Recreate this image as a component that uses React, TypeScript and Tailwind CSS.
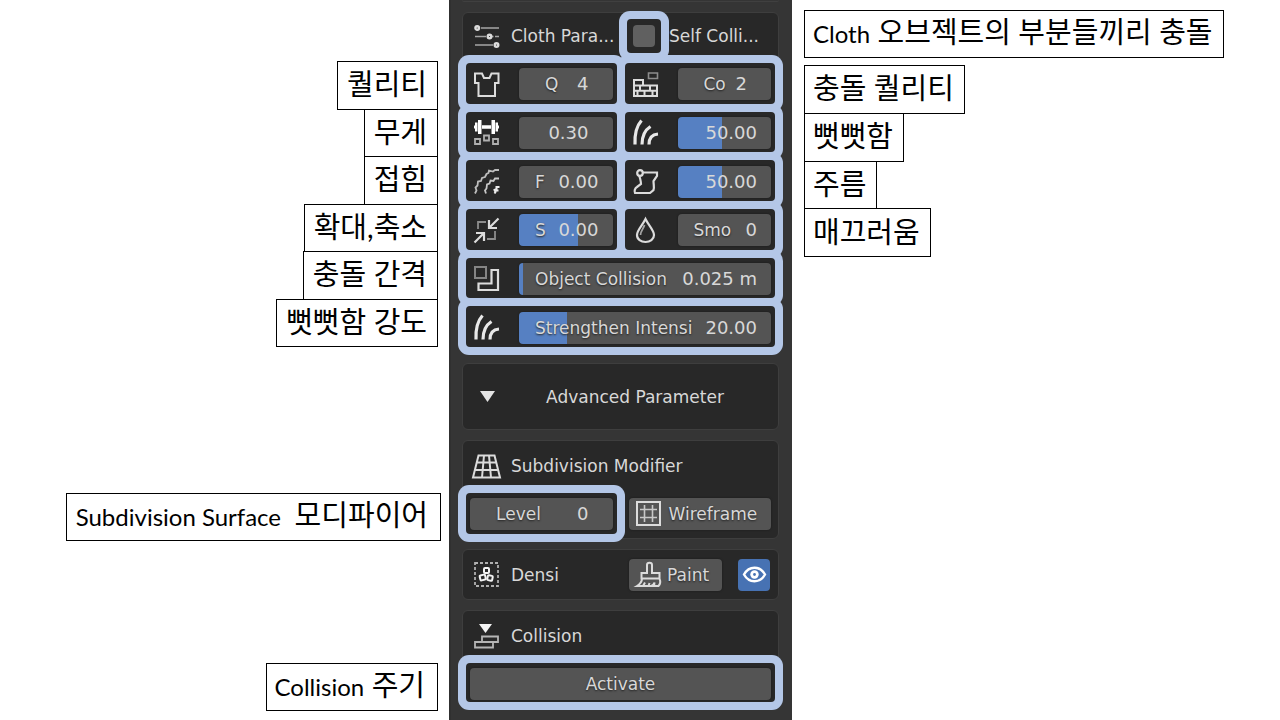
import { useState } from "react";
import type { ReactNode } from "react";

function Icon({ children }: { children: ReactNode }) {
  return (
    <svg
      viewBox="0 0 25 25"
      className="h-[25px] w-[25px] shrink-0 overflow-visible"
      fill="none"
      stroke="#dcdcdc"
      strokeWidth="1.6"
      aria-hidden="true"
    >
      {children}
    </svg>
  );
}

const SlidersIcon = () => (
  <Icon>
    <g stroke="#a5a5a5" strokeWidth="1.6">
      <path d="M7 4h18M1 12.500h11M18 12.500h1.500M21 12.500h4M1 21h18" />
    </g>
    <g strokeWidth="2.4">
      <circle cx="3.200" cy="4" r="1.800" />
      <circle cx="15.500" cy="12.500" r="1.800" />
      <circle cx="22.500" cy="21" r="1.800" />
    </g>
  </Icon>
);

const ShirtIcon = () => (
  <Icon>
    <path d="M1 1.500h7l2 4.500h5.500l2-4.500h7v9.500h-3.500V24H4.500V11H1z" strokeWidth="2" />
  </Icon>
);

const BricksIcon = () => (
  <Icon>
    <path d="M15.500 1h9v5.500h-9z" stroke="#8d8d8d" />
    <path
      d="M1 24V8h9v5.500h14V24zM1 13.500h9M1 18.700h23M7 13.500v5M17 13.500v5M11.500 18.700V24M19.500 18.700V24M4.500 18.700V24"
      strokeWidth="2"
    />
  </Icon>
);

const DumbbellIcon = () => (
  <Icon>
    <g fill="#fff" stroke="none">
      <path d="M4 0h3.500v14H4zM17.500 0H21v14h-3.500zM1 2.500h2.500v9H1zM21.500 2.500H24v9h-2.500zM0 5.500h1v3H0zM24 5.500h1v3h-1zM8 5.200h9v3.600H8z" />
    </g>
    <path d="M1 19h5v5H1zM10 15.500h5v5h-5zM19 19h5v5h-5z" stroke="#b0b0b0" strokeWidth="1.8" />
  </Icon>
);

const FoldsIcon = () => (
  <Icon>
    <path
      d="M1 24.500l1.500-3-1-3 2-2 .5-4 3-.5 1-3 3-1 1.500-3 2-1 .5-2.500 4 1 2-1.500h4"
      stroke="#bdbdbd"
      strokeWidth="1.8"
    />
    <path d="M12 24.500l-1-3 1.500-2 .5-4 2.500-1 1-3 3 .5 1.500-2.500h4" stroke="#c8c8c8" strokeWidth="1.8" />
    <path d="M20.500 24.500l1-1.500-1-2 2-1v-2h3M22 21.500h2.500" stroke="#ececec" strokeWidth="2" />
  </Icon>
);

const StrandsIcon = () => (
  <Icon>
    <g stroke="#e8e8e8" strokeWidth="3.2">
      <path d="M2 24.500C1.500 14 3.500 6 8.500 .5" />
      <path d="M9 24.500C9 16 12 10 17.500 6.500" />
      <path d="M16 24.500c0-6 3-10 9-10.500" />
    </g>
  </Icon>
);

const WrinkleIcon = () => (
  <Icon>
    <path
      d="M10 3.500h14v3.500l-3.500 5c0 4 1 6 0 9L17 24H2c-1-2 0-5 2-6l4-3c0-3-1-6-2-9"
      strokeWidth="2.2"
    />
    <circle cx="7" cy="4" r="2.800" fill="#282828" strokeWidth="2.2" />
  </Icon>
);

const ShrinkIcon = () => (
  <Icon>
    <path d="M4 11V4h8M13 21h8v-8" stroke="#8d8d8d" strokeWidth="1.8" />
    <path d="M24.500 .5l-9 9M15 2v8h8M.5 24.500l9-9M2 15h8v8" strokeWidth="2.2" />
  </Icon>
);

const DropIcon = () => (
  <Icon>
    <path
      d="M12.500 1C9 8 4 12 4 17c0 4.500 4 7 8.500 7s8.500-2.500 8.500-7c0-5-5-9-8.500-16z"
      strokeWidth="2.2"
    />
    <path d="M11.500 7c-1 4-4 6-4 10" stroke="#a5a5a5" strokeWidth="1.800" />
  </Icon>
);

const DistanceIcon = () => (
  <Icon>
    <path d="M1 1h11v11H1z" stroke="#858585" strokeWidth="2" />
    <path d="M17.500 4H24v20H4.500v-6.500h13z" strokeWidth="2.2" />
  </Icon>
);

const GridPerspectiveIcon = () => (
  <Icon>
    <path
      d="M4.500 1.500h16L26 23.500H-1zM3 8.500h19M1 16h23M10 1.500l-2 22M15 1.500l2 22"
      strokeWidth="2"
    />
  </Icon>
);

const WireframeIcon = () => (
  <Icon>
    <path d="M1 1h23v23H1z" strokeWidth="2" />
    <path d="M8.500 4v17M16.500 4v17M4 8.500h17M4 16.500h17" stroke="#c8c8c8" strokeWidth="1.600" />
  </Icon>
);

const DensityIcon = () => (
  <Icon>
    <path d="M1 1h23v23H1z" stroke="#b0b0b0" strokeDasharray="3 2" strokeWidth="1.800" />
    <g stroke="#f4f4f4" strokeWidth="2">
      <rect x="10" y="6" width="5" height="5" rx="1" />
      <rect x="6" y="13" width="5.500" height="5" rx="1" transform="rotate(-15 8.700 15.500)" />
      <rect x="13.500" y="13.500" width="5" height="5" rx="1" transform="rotate(12 16 16)" />
    </g>
  </Icon>
);

const BrushIcon = () => (
  <Icon>
    <path
      d="M11 11V3c0-3 5-3 5 0v8h7.500v5.500h-18V11zM6 16.500c0 3-1 5-5 7.500h14c2-.5 3-1.500 3.500-3.500 0 1.500 0 2.500-1 3.500h5c2-2 2-5 1-7.500M7 24l2-3.500M12.500 24l1-3"
      strokeWidth="2"
    />
  </Icon>
);

const EyeIcon = () => (
  <Icon>
    <path
      d="M2 12.500C7 3.500 18 3.500 23 12.500 18 21.500 7 21.500 2 12.500z"
      stroke="#fff"
      strokeWidth="2.400"
    />
    <circle cx="12.500" cy="12.500" r="4.200" fill="#fff" stroke="none" />
    <circle cx="12.500" cy="12.500" r="1.400" fill="#4772b3" stroke="none" />
  </Icon>
);

const CollisionIcon = () => (
  <Icon>
    <path d="M5 0h13l-6.500 9z" fill="#f4f4f4" stroke="none" />
    <path d="M8 17.500v-5h16V18h-5" stroke="#b5b5b5" strokeWidth="1.800" />
    <path d="M1 18h18v5.500H1z" stroke="#b5b5b5" strokeWidth="1.800" />
  </Icon>
);

const highlight = "rounded-[4px] ring-8 ring-[#b4c7e7]";
const buttonBase =
  "rounded-[4px] bg-[#545454] text-[17px] text-[#d8d8d8] shadow-[0_0_2px_#181818] [text-shadow:0_1px_2px_#222]";

type FieldProps = {
  name: string;
  label?: string;
  value: string;
  fill?: number;
  inset?: boolean;
};

function Field({ name, label, value, fill = 0, inset = false }: FieldProps) {
  const [text, setText] = useState(value);
  return (
    <label
      className={
        "flex h-8 min-w-0 flex-1 items-center gap-1 overflow-hidden " +
        buttonBase +
        (inset ? " pr-6 pl-[26px]" : " pr-[14px] pl-4")
      }
      style={
        fill
          ? { backgroundImage: `linear-gradient(90deg, #5680c2 ${fill}%, transparent ${fill}%)` }
          : undefined
      }
    >
      {label && <span className="shrink-0 whitespace-nowrap">{label}</span>}
      <input
        type="text"
        aria-label={name}
        value={text}
        onChange={(e) => setText(e.target.value)}
        className="w-0 min-w-0 flex-1 bg-transparent text-right text-[18px] outline-none"
      />
    </label>
  );
}

function Parameter({ icon, wide, ...field }: FieldProps & { icon: ReactNode; wide?: boolean }) {
  return (
    <div
      className={
        "flex items-center gap-5 bg-[#282828] pt-0.5 pr-1 pl-2 " + highlight + (wide ? " col-span-2" : "")
      }
    >
      {icon}
      <Field {...field} />
    </div>
  );
}

function Card({ children, className }: { children: ReactNode; className: string }) {
  return (
    <section className={"rounded-[6px] border border-[#3e3e3e] bg-[#282828] px-[3px] " + className}>
      {children}
    </section>
  );
}

function Note({ children, className = "" }: { children: ReactNode; className?: string }) {
  return (
    <div
      className={
        "flex min-h-12 items-center border border-black bg-white pb-0.5 text-[29px] leading-[32px] whitespace-nowrap text-black " +
        className
      }
    >
      <p>{children}</p>
    </div>
  );
}

function Latin({ children }: { children: ReactNode }) {
  return <span className="text-[24px]">{children}</span>;
}

const leftNotes = ["퀄리티", "무게", "접힘", "확대,축소", "충돌 간격", "뻣뻣함 강도"];
const rightNotes = ["충돌 퀄리티", "뻣뻣함", "주름", "매끄러움"];

export default function App() {
  const [selfCollision, setSelfCollision] = useState(false);

  return (
    <div className="grid min-h-screen grid-cols-[449fr_343px_488fr] bg-white font-['Lato','Noto_Sans_CJK_KR',sans-serif]">
      <aside className="flex flex-col items-end pt-[61px] pr-2">
        <div className="mr-[3px] grid h-[285px] grid-rows-6 justify-items-end">
          {leftNotes.map((note) => (
            <Note key={note} className="-mb-px pr-[10px] pl-[9px]">
              {note}
            </Note>
          ))}
        </div>
        <Note className="mt-[147px] pr-3 pl-[9px]">
          <Latin>Subdivision Surface&nbsp;</Latin> 모디파이어
        </Note>
        <Note className="mt-[122px] mr-[3px] pr-3 pl-2">
          <Latin>Collision</Latin> 주기
        </Note>
      </aside>

      <main className="flex flex-col gap-[10px] border-l-2 border-[#303030] bg-[#353535] pr-[13px] pl-[11px] font-['DejaVu_Sans',sans-serif] text-[17px] leading-6 text-[#d8d8d8]">
        <div className="h-[2px] rounded-b-[4px] border-b border-[#404040]" />

        <Card className="pt-[6px] pb-[5px]">
          <div className="flex h-[34px] items-center">
            <h2 className="flex flex-1 items-center gap-3 pl-2">
              <SlidersIcon />
              <span className="whitespace-nowrap">Cloth Para...</span>
            </h2>
            <label className="flex w-[148px] items-center gap-2">
              <span className={"flex h-[34px] w-[34px] items-center justify-center " + highlight}>
                <input
                  type="checkbox"
                  aria-label="Self Collision"
                  checked={selfCollision}
                  onChange={(e) => setSelfCollision(e.target.checked)}
                  className="h-[22px] w-[22px] appearance-none rounded-[4px] bg-[#606060] checked:bg-[#5680c2]"
                />
              </span>
              <span className="whitespace-nowrap">Self Colli...</span>
            </label>
          </div>
          <div className="mt-[10px] grid h-[284px] grid-cols-2 grid-rows-6 gap-2">
            <Parameter icon={<ShirtIcon />} name="Quality" label="Q" value="4" inset />
            <Parameter icon={<BricksIcon />} name="Collision quality" label="Co" value="2" inset />
            <Parameter icon={<DumbbellIcon />} name="Weight" value="0.30" inset />
            <Parameter icon={<StrandsIcon />} name="Stiffness" value="50.00" fill={47} />
            <Parameter icon={<FoldsIcon />} name="Fold" label="F" value="0.00" />
            <Parameter icon={<WrinkleIcon />} name="Wrinkle" value="50.00" fill={47} />
            <Parameter icon={<ShrinkIcon />} name="Shrink" label="S" value="0.00" fill={63} />
            <Parameter icon={<DropIcon />} name="Smooth" label="Smo" value="0" />
            <Parameter icon={<DistanceIcon />} name="Object collision distance" label="Object Collision" value="0.025 m" fill={1.5} wide />
            <Parameter icon={<StrandsIcon />} name="Strengthen intensity" label="Strengthen Intensi" value="20.00" fill={19} wide />
          </div>
        </Card>

        <Card className="flex h-[67px]">
          <button type="button" className="flex flex-1 items-center pl-[14px]">
            <svg viewBox="0 0 15 11" className="h-[11px] w-[15px]" fill="#e4e4e4" aria-hidden="true">
              <path d="M0 0h15L7.500 11z" />
            </svg>
            <span className="flex-1 text-center">Advanced Parameter</span>
          </button>
        </Card>

        <Card className="pb-1">
          <h2 className="flex h-[52px] items-center gap-3 pb-0.5 pl-2">
            <GridPerspectiveIcon />
            Subdivision Modifier
          </h2>
          <div className="grid h-[41px] grid-cols-2 gap-2">
            <div className={"flex items-center px-1 " + highlight}>
              <Field name="Subdivision level" label="Level" value="0" inset />
            </div>
            <div className="flex items-center px-1">
              <button type="button" className={"flex h-8 flex-1 items-center gap-2 pl-[7px] " + buttonBase}>
                <WireframeIcon />
                Wireframe
              </button>
            </div>
          </div>
        </Card>

        <Card className="flex h-[51px] items-center">
          <h2 className="flex flex-1 items-center gap-3 pl-2">
            <DensityIcon />
            Densi
          </h2>
          <button type="button" className={"mr-4 flex h-8 w-[93px] items-center gap-[6px] pl-[7px] " + buttonBase}>
            <BrushIcon />
            Paint
          </button>
          <button
            type="button"
            aria-label="Show density"
            className="mr-[5px] flex h-8 w-8 items-center justify-center rounded-[4px] bg-[#4772b3]"
          >
            <EyeIcon />
          </button>
        </Card>

        <Card className="pb-[3px]">
          <h2 className="flex h-[52px] items-center gap-3 pb-0.5 pl-2">
            <CollisionIcon />
            Collision
          </h2>
          <div className={"flex h-[39px] items-center px-1 pt-0.5 " + highlight}>
            <button type="button" className={"h-8 flex-1 " + buttonBase}>
              Activate
            </button>
          </div>
        </Card>
      </main>

      <aside className="flex flex-col items-start pt-[10px] pl-3">
        <Note className="mb-[7px] pr-[10px] pl-2">
          <Latin>Cloth</Latin> 오브젝트의 부분들끼리 충돌
        </Note>
        <div className="grid h-[191px] grid-rows-4 justify-items-start">
          {rightNotes.map((note) => (
            <Note key={note} className="-mb-px pr-[10px] pl-2">
              {note}
            </Note>
          ))}
        </div>
      </aside>
    </div>
  );
}
